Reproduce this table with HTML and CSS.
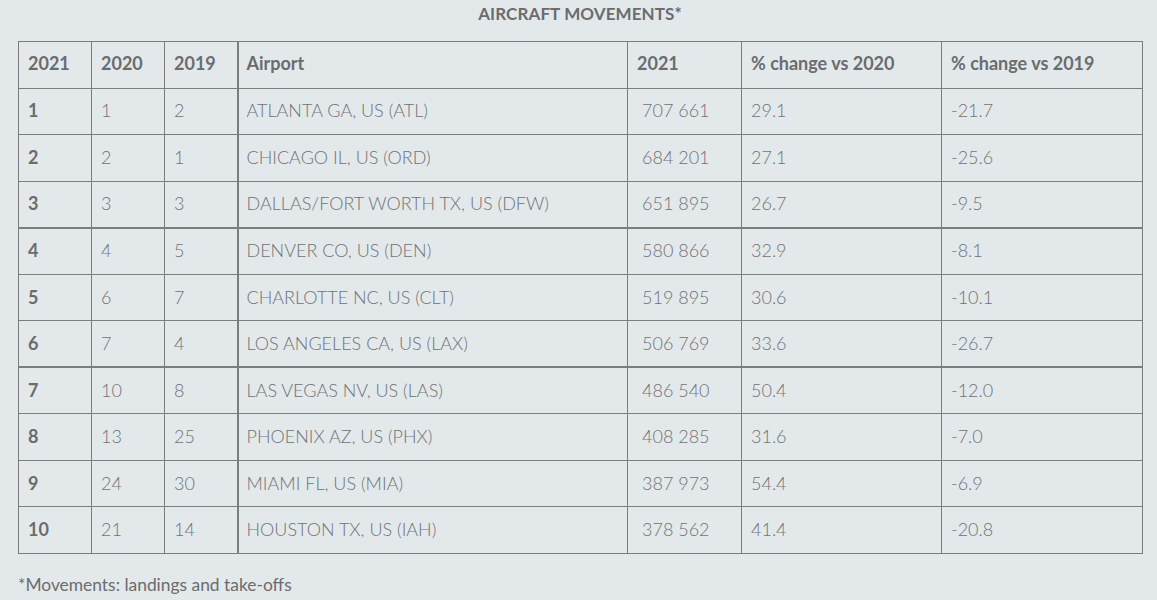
FILE: index.html
```html
<!DOCTYPE html>
<html>
<head>
<meta charset="utf-8">
<link rel="stylesheet" href="styles.css">
</head>
<body>
<div class="page">
  <h1 class="title">AIRCRAFT MOVEMENTS*</h1>
  <table class="data">
    <colgroup>
      <col class="c-rank"><col class="c-rank"><col class="c-rank"><col class="c-airport"><col class="c-num"><col class="c-p1"><col class="c-p2">
    </colgroup>
    <thead>
      <tr><th>2021</th><th>2020</th><th>2019</th><th class="sep">Airport</th><th>2021</th><th>% change vs 2020</th><th>% change vs 2019</th></tr>
    </thead>
    <tbody>
      <tr><th>1</th><td>1</td><td>2</td><td class="sep">ATLANTA GA, US (ATL)</td><td class="num">707 661</td><td>29.1</td><td>-21.7</td></tr>
      <tr><th>2</th><td>2</td><td>1</td><td class="sep">CHICAGO IL, US (ORD)</td><td class="num">684 201</td><td>27.1</td><td>-25.6</td></tr>
      <tr class="grp"><th>3</th><td>3</td><td>3</td><td class="sep">DALLAS/FORT WORTH TX, US (DFW)</td><td class="num">651 895</td><td>26.7</td><td>-9.5</td></tr>
      <tr><th>4</th><td>4</td><td>5</td><td class="sep">DENVER CO, US (DEN)</td><td class="num">580 866</td><td>32.9</td><td>-8.1</td></tr>
      <tr><th>5</th><td>6</td><td>7</td><td class="sep">CHARLOTTE NC, US (CLT)</td><td class="num">519 895</td><td>30.6</td><td>-10.1</td></tr>
      <tr class="grp"><th>6</th><td>7</td><td>4</td><td class="sep">LOS ANGELES CA, US (LAX)</td><td class="num">506 769</td><td>33.6</td><td>-26.7</td></tr>
      <tr><th>7</th><td>10</td><td>8</td><td class="sep">LAS VEGAS NV, US (LAS)</td><td class="num">486 540</td><td>50.4</td><td>-12.0</td></tr>
      <tr><th>8</th><td>13</td><td>25</td><td class="sep">PHOENIX AZ, US (PHX)</td><td class="num">408 285</td><td>31.6</td><td>-7.0</td></tr>
      <tr><th>9</th><td>24</td><td>30</td><td class="sep">MIAMI FL, US (MIA)</td><td class="num">387 973</td><td>54.4</td><td>-6.9</td></tr>
      <tr><th>10</th><td>21</td><td>14</td><td class="sep">HOUSTON TX, US (IAH)</td><td class="num">378 562</td><td>41.4</td><td>-20.8</td></tr>
    </tbody>
  </table>
  <p class="note">*Movements: landings and take-offs</p>
</div>
</body>
</html>
```

FILE: styles.css
```css
html, body {
  margin: 0;
  padding: 0;
  background: #e3e9eb;
}
body {
  font-family: "Lato", "Nunito Sans", "Open Sans", sans-serif;
  color: #6a6c6e;
}
.page {
  width: 1124px;
  padding: 0 0 0 18px;
}
.title {
  margin: 0;
  height: 41px;
  padding-top: 3px;
  box-sizing: border-box;
  text-align: center;
  font-size: 17px;
  font-weight: 700;
  color: #6a6c6e;
  letter-spacing: 0.1px;
}
.data {
  border-collapse: collapse;
  table-layout: fixed;
  width: 1125px;
}
.c-rank { width: 73px; }
.c-airport { width: 390px; }
.c-num { width: 114px; }
.c-p1 { width: 200px; }
.c-p2 { width: 201px; }
.data th, .data td {
  border: 1px solid #7b7e80;
  height: 46.55px;
  padding: 0 9px 2px;
  text-align: left;
  font-size: 18px;
  vertical-align: middle;
  box-sizing: border-box;
}
.data thead th { padding-bottom: 4px; }
.data th { font-weight: 700; }
.data td { font-weight: 300; color: #707274; }
.data td.num { padding-left: 14px; }
.data .sep { border-left: 2px solid #7b7e80; padding-left: 8px; }
.data tr.grp th, .data tr.grp td { border-bottom: 2px solid #7b7e80; }
.note {
  margin: 20px 0 0;
  font-size: 17.4px;
  font-weight: 400;
}
```
